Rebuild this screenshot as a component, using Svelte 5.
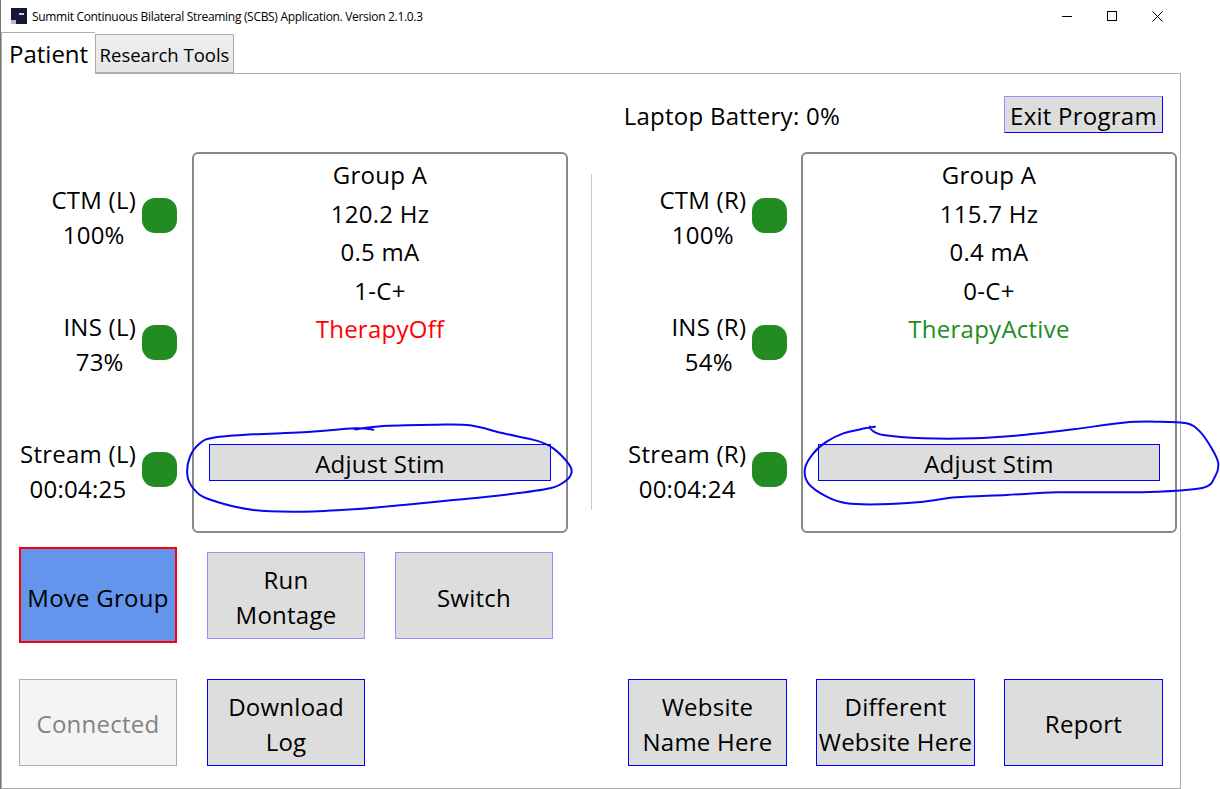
<script>
	const leftMark = [
		[555, 88], [640, 78], [800, 74], [900, 76], [1000, 100], [1100, 122], [1150, 145], [1195, 190], [1205, 215],
		[1190, 240], [1140, 265], [1000, 285], [850, 300], [700, 315], [550, 328], [400, 335], [250, 330], [115, 297],
		[70, 265], [52, 225], [60, 170], [90, 130], [130, 113], [250, 103], [400, 97], [555, 85], [610, 89]
	];
	const rightMark = [
		[255, 80], [225, 85], [160, 100], [110, 125], [70, 160], [45, 205], [55, 250], [110, 290], [170, 310],
		[270, 313], [400, 305], [500, 292], [650, 285], [800, 277], [950, 277], [1100, 275], [1240, 263], [1275, 230],
		[1285, 190], [1265, 145], [1230, 95], [1190, 70], [1100, 65], [1000, 68], [850, 88], [700, 105], [550, 115],
		[400, 115], [280, 105], [245, 90], [240, 80]
	];

	// smooth line through the traced points
	function smooth(pts) {
		let d = `M${pts[0][0]} ${pts[0][1]}`;
		for (let i = 0; i < pts.length - 1; i++) {
			const a = pts[i - 1] || pts[i];
			const b = pts[i];
			const c = pts[i + 1];
			const e = pts[i + 2] || c;
			d += ` C${b[0] + (c[0] - a[0]) / 6} ${b[1] + (c[1] - a[1]) / 6} ${c[0] - (e[0] - b[0]) / 6} ${c[1] - (e[1] - b[1]) / 6} ${c[0]} ${c[1]}`;
		}
		return d;
	}

	const sides = [
		{
			id: 'L',
			hz: '120.2 Hz',
			ma: '0.5 mA',
			contacts: '1-C+',
			therapy: 'TherapyOff',
			state: 'off',
			ctm: '100%',
			ins: '73%',
			stream: '00:04:25'
		},
		{
			id: 'R',
			hz: '115.7 Hz',
			ma: '0.4 mA',
			contacts: '0-C+',
			therapy: 'TherapyActive',
			state: 'on',
			ctm: '100%',
			ins: '54%',
			stream: '00:04:24'
		}
	];
</script>

<div class="window">
	<header class="titlebar">
		<svg class="app-icon" width="16" height="16" viewBox="0 0 16 16">
			<rect width="16" height="16" fill="#14163a" />
			<rect x="0" y="12" width="5" height="4" fill="#b9bac4" />
			<rect x="8" y="5" width="5" height="2" fill="#c9cad6" />
		</svg>
		<span class="title">Summit Continuous Bilateral Streaming (SCBS) Application. Version 2.1.0.3</span>
		<div class="controls">
			<svg width="10" height="10" viewBox="0 0 10 10"><path d="M0 5.5H10" stroke="#000" /></svg>
			<svg width="10" height="10" viewBox="0 0 10 10"><rect x=".5" y=".5" width="9" height="9" fill="none" stroke="#000" /></svg>
			<svg width="11" height="11" viewBox="0 0 11 11"><path d="M.5 .5L10.5 10.5M10.5 .5L.5 10.5" stroke="#000" /></svg>
		</div>
	</header>

	<nav class="tabs">
		<div class="tab active">Patient</div>
		<div class="tab">Research Tools</div>
	</nav>

	<main class="panel">
		<div class="top">
			<span class="battery">Laptop Battery: 0%</span>
			<button class="btn exit">Exit Program</button>
		</div>

		<div class="middle">
			{#each sides as side, i (side.id)}
				{#if i === 1}
					<div class="divider"></div>
				{/if}
				<section class="side">
					<div class="stats">
						<div class="stat">
							<div class="stat-text">CTM ({side.id})<br />{side.ctm}</div>
							<span class="led"></span>
						</div>
						<div class="stat">
							<div class="stat-text">INS ({side.id})<br />{side.ins}</div>
							<span class="led"></span>
						</div>
						<div class="stat">
							<div class="stat-text">Stream ({side.id})<br />{side.stream}</div>
							<span class="led"></span>
						</div>
					</div>
					<div class="box">
						<div class="info">
							<div>Group A</div>
							<div>{side.hz}</div>
							<div>{side.ma}</div>
							<div>{side.contacts}</div>
							<div class={side.state}>{side.therapy}</div>
						</div>
						<button class="btn adjust">Adjust Stim</button>
					</div>
				</section>
			{/each}
		</div>

		<div class="bottom">
			<div class="cluster">
				<button class="btn move">Move Group</button>
				<button class="btn soft">Run<br />Montage</button>
				<button class="btn soft one">Switch</button>
				<button class="btn connected">Connected</button>
				<button class="btn">Download<br />Log</button>
			</div>
			<div class="cluster right">
				<button class="btn">Website<br />Name Here</button>
				<button class="btn">Different<br />Website Here</button>
				<button class="btn">Report</button>
			</div>
		</div>
	</main>

	<svg class="ink" width="1220" height="789" viewBox="0 0 1220 789">
		<path d={smooth(leftMark)} transform="translate(170 400) scale(.3333)" />
		<path d={smooth(rightMark)} transform="translate(790 400) scale(.3333)" />
	</svg>
</div>

<style>
	:global(body) {
		margin: 0;
		background: #fff;
		color: #000;
		font-family: 'Open Sans', 'Noto Sans', sans-serif;
	}

	.window {
		position: relative;
		box-sizing: border-box;
		width: 1220px;
		height: 789px;
		overflow: hidden;
		border-left: 1px solid #777;
		background: #fff;
		letter-spacing: 0.25px;
	}

	.titlebar {
		display: flex;
		align-items: center;
		height: 32px;
		padding-left: 10px;
	}

	.app-icon {
		margin-right: 5px;
	}

	.title {
		font-size: 12px;
		letter-spacing: -0.31px;
		white-space: nowrap;
	}

	.controls {
		display: flex;
		align-items: center;
		gap: 35px;
		margin-left: auto;
		padding-right: 57px;
	}

	.tabs {
		display: flex;
		align-items: flex-end;
		height: 41px;
	}

	.tab {
		box-sizing: border-box;
		width: 139px;
		height: 39px;
		border: 1px solid #acacac;
		background: linear-gradient(#f0f0f0, #e5e5e5);
		font-size: 18.5px;
		letter-spacing: 0;
		line-height: 39px;
		text-align: center;
		white-space: nowrap;
	}

	.tab.active {
		position: relative;
		z-index: 1;
		width: 94px;
		height: 42px;
		margin-bottom: -1px;
		border-bottom: 0;
		border-right: 0;
		background: #fff;
		font-size: 24px;
		letter-spacing: 0;
		line-height: 42px;
		text-align: left;
		padding-left: 7px;
	}

	.panel {
		box-sizing: border-box;
		width: 1180px;
		height: 716px;
		padding: 22px 2px 0 17px;
		border: 1px solid #acacac;
	}

	.top {
		display: flex;
		align-items: center;
		justify-content: flex-end;
		gap: 164px;
		height: 37px;
		padding-right: 15px;
		font-size: 24px;
	}

	.battery {
		position: relative;
		top: 1px;
	}

	.btn {
		box-sizing: border-box;
		padding: 2px 0 0;
		border: 1px solid #0000ff;
		border-radius: 0;
		background: #dddddd;
		color: #000;
		font: inherit;
		font-size: 24px;
		letter-spacing: 0.25px;
		line-height: 35px;
	}

	.exit {
		width: 159px;
		height: 37px;
		padding-top: 1px;
		border-top-color: #8f8fff;
		border-left-color: #8f8fff;
	}

	.middle {
		display: flex;
		align-items: flex-start;
		margin-top: 19px;
	}

	.side {
		display: flex;
		gap: 15px;
	}

	.stats {
		display: grid;
		grid-template-rows: repeat(3, 127px);
		width: 158px;
	}

	.stat {
		display: flex;
		align-items: center;
		justify-content: flex-end;
		gap: 6px;
	}

	.stat-text {
		position: relative;
		top: 1px;
		font-size: 24px;
		line-height: 35px;
		text-align: center;
		white-space: nowrap;
	}

	.led {
		flex: none;
		width: 35px;
		height: 35px;
		border-radius: 13px;
		background: #228b22;
	}

	.box {
		box-sizing: border-box;
		display: flex;
		flex-direction: column;
		justify-content: space-between;
		width: 376px;
		height: 381px;
		padding: 2px 15px 50px;
		border: 2px solid #888;
		border-radius: 6px;
	}

	.info {
		font-size: 24px;
		line-height: 38.5px;
		text-align: center;
	}

	.off {
		color: #ff0000;
	}

	.on {
		color: #228b22;
	}

	.adjust {
		width: 342px;
		height: 37px;
		padding-top: 1px;
	}

	.divider {
		flex: none;
		width: 1px;
		height: 336px;
		margin: 22px 36px 0 23px;
		background: #c8c8c8;
	}

	.bottom {
		display: flex;
		gap: 75px;
		margin-top: 19px;
	}

	.cluster {
		display: grid;
		grid-template-columns: repeat(3, 158px);
		grid-template-rows: 87px 87px;
		column-gap: 30px;
		row-gap: 40px;
	}

	.cluster.right {
		grid-template-columns: repeat(3, 159px);
		column-gap: 29px;
	}

	.cluster.right .btn {
		grid-row: 2;
	}

	.soft {
		border-color: #8f8fff;
	}

	.one {
		padding-top: 4px;
	}

	.move {
		height: 96px;
		margin-top: -5px;
		padding-top: 4px;
		border: 2px solid #ff0000;
		background: #6495ed;
	}

	.connected {
		border-color: #adadad;
		background: #f4f4f4;
		color: #838383;
	}

	.ink {
		position: absolute;
		inset: 0;
		left: -1px;
		pointer-events: none;
	}

	.ink path {
		fill: none;
		stroke: #0808ee;
		stroke-width: 6;
		stroke-linejoin: round;
		stroke-linecap: round;
	}
</style>
